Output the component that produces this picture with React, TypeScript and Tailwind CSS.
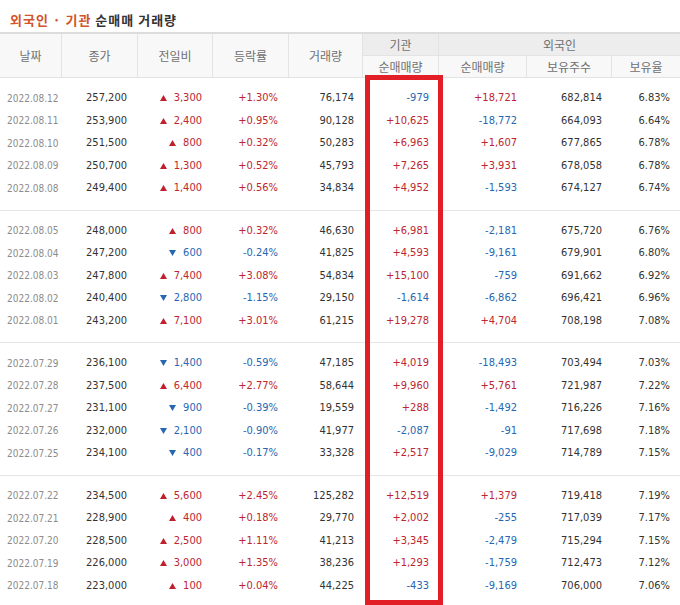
import React from 'react';

type Row = [string, string, string, string, string, string, string, string, string];

const groups: Row[][] = [
	[
		['2022.08.12', '257,200', '+3,300', '+1.30%', '76,174', '-979', '+18,721', '682,814', '6.83%'],
		['2022.08.11', '253,900', '+2,400', '+0.95%', '90,128', '+10,625', '-18,772', '664,093', '6.64%'],
		['2022.08.10', '251,500', '+800', '+0.32%', '50,283', '+6,963', '+1,607', '677,865', '6.78%'],
		['2022.08.09', '250,700', '+1,300', '+0.52%', '45,793', '+7,265', '+3,931', '678,058', '6.78%'],
		['2022.08.08', '249,400', '+1,400', '+0.56%', '34,834', '+4,952', '-1,593', '674,127', '6.74%'],
	],
	[
		['2022.08.05', '248,000', '+800', '+0.32%', '46,630', '+6,981', '-2,181', '675,720', '6.76%'],
		['2022.08.04', '247,200', '-600', '-0.24%', '41,825', '+4,593', '-9,161', '679,901', '6.80%'],
		['2022.08.03', '247,800', '+7,400', '+3.08%', '54,834', '+15,100', '-759', '691,662', '6.92%'],
		['2022.08.02', '240,400', '-2,800', '-1.15%', '29,150', '-1,614', '-6,862', '696,421', '6.96%'],
		['2022.08.01', '243,200', '+7,100', '+3.01%', '61,215', '+19,278', '+4,704', '708,198', '7.08%'],
	],
	[
		['2022.07.29', '236,100', '-1,400', '-0.59%', '47,185', '+4,019', '-18,493', '703,494', '7.03%'],
		['2022.07.28', '237,500', '+6,400', '+2.77%', '58,644', '+9,960', '+5,761', '721,987', '7.22%'],
		['2022.07.27', '231,100', '-900', '-0.39%', '19,559', '+288', '-1,492', '716,226', '7.16%'],
		['2022.07.26', '232,000', '-2,100', '-0.90%', '41,977', '-2,087', '-91', '717,698', '7.18%'],
		['2022.07.25', '234,100', '-400', '-0.17%', '33,328', '+2,517', '-9,029', '714,789', '7.15%'],
	],
	[
		['2022.07.22', '234,500', '+5,600', '+2.45%', '125,282', '+12,519', '+1,379', '719,418', '7.19%'],
		['2022.07.21', '228,900', '+400', '+0.18%', '29,770', '+2,002', '-255', '717,039', '7.17%'],
		['2022.07.20', '228,500', '+2,500', '+1.11%', '41,213', '+3,345', '-2,479', '715,294', '7.15%'],
		['2022.07.19', '226,000', '+3,000', '+1.35%', '38,236', '+1,293', '-1,759', '712,473', '7.12%'],
		['2022.07.18', '223,000', '+100', '+0.04%', '44,225', '-433', '-9,169', '706,000', '7.06%'],
	],
];

const cols = 'grid grid-cols-[62px_76px_75px_76px_74px_76px_88px_85px_68px]';
const num = "font-['DejaVu_Sans_Condensed','Liberation_Sans',sans-serif]";
const kr = "font-['Noto_Sans_CJK_KR',sans-serif]";

const tone = (v: string) => (v.startsWith('-') ? 'text-[#2767b2]' : 'text-[#bd2530]');

const Tri = ({ up }: { up: boolean }) => (
	<svg width="7" height="6" viewBox="0 0 7 6" className="mr-[7px]">
		{up ? (
			<polygon points="3.5,0 7,6 0,6" fill="#c0202c" />
		) : (
			<polygon points="0,0 7,0 3.5,6" fill="#2767b2" />
		)}
	</svg>
);

const DataRow = ({ r }: { r: Row }) => {
	const up = !r[2].startsWith('-');
	return (
		<div className={`${cols} h-[22.5px] items-center text-[11px] ${num} text-[#333]`}>
			<span className="pl-[7px] text-[10px] text-[#8c8c8c]">{r[0]}</span>
			<span className="text-right pr-[11px]">{r[1]}</span>
			<span className={`flex items-center justify-end pr-[11px] ${tone(r[2])}`}>
				<Tri up={up} />
				{r[2].slice(1)}
			</span>
			<span className={`text-right pr-[11px] ${tone(r[3])}`}>{r[3]}</span>
			<span className="text-right pr-[9px]">{r[4]}</span>
			<span className={`text-right pr-[10px] ${tone(r[5])}`}>{r[5]}</span>
			<span className={`text-right pr-[10px] ${tone(r[6])}`}>{r[6]}</span>
			<span className="text-right pr-[10px]">{r[7]}</span>
			<span className="text-right pr-[10px]">{r[8]}</span>
		</div>
	);
};

const App = () => {
	return (
		<main className="relative w-[680px] h-[605px] overflow-hidden bg-white">
			<h1 className={`h-[32px] pl-[10px] pt-[11px] text-[13px] font-bold leading-[17px] tracking-[1px] ${kr}`}>
				<span className="text-[#d2532c]">외국인 · 기관</span>{' '}
				<span className="text-[#333]">순매매 거래량</span>
			</h1>

			<div
				className={`${cols} grid-rows-[22px_21px] border-t-2 border-b border-t-[#dcdcdc] border-b-[#e3e3e3] bg-[#f8f8f8] text-[12px] text-[#707070] ${kr}`}
			>
				<div className="row-span-2 flex items-center justify-center border-r border-[#e3e3e3]">날짜</div>
				<div className="row-span-2 flex items-center justify-center border-r border-[#e3e3e3]">종가</div>
				<div className="row-span-2 flex items-center justify-center border-r border-[#e3e3e3]">전일비</div>
				<div className="row-span-2 flex items-center justify-center border-r border-[#e3e3e3]">등락률</div>
				<div className="row-span-2 flex items-center justify-center border-r border-[#e3e3e3]">거래량</div>
				<div className="flex items-center justify-center border-r border-b border-[#e3e3e3] bg-[#ededed]">기관</div>
				<div className="col-span-3 flex items-center justify-center border-b border-[#e3e3e3] bg-[#ededed]">외국인</div>
				<div className="flex items-center justify-center border-r border-[#e3e3e3]">순매매량</div>
				<div className="flex items-center justify-center border-r border-[#e3e3e3]">순매매량</div>
				<div className="flex items-center justify-center border-r border-[#e3e3e3]">보유주수</div>
				<div className="flex items-center justify-center">보유율</div>
			</div>

			<div>
				{groups.map((g, i) => (
					<div key={i} className="pt-[9px] pb-[10px] border-b border-[#e6e6e6]">
						{g.map((r) => (
							<DataRow key={r[0]} r={r} />
						))}
					</div>
				))}
			</div>

			<div className="absolute left-[365px] top-[75px] w-[78px] h-[530px] border-[5px] border-[#e21f26]" />
		</main>
	);
};

export default App;
